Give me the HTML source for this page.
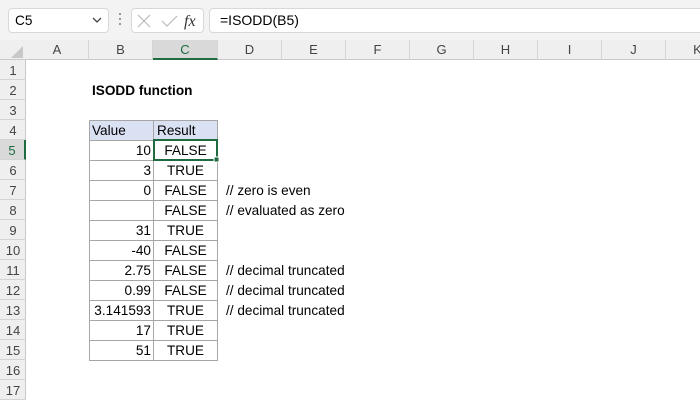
<!DOCTYPE html>
<html><head><style>
body{margin:0;width:700px;height:400px;overflow:hidden;background:#fff;font-family:"Liberation Sans",Calibri,sans-serif;position:relative}
div{position:absolute;box-sizing:border-box}
.t{font-size:13.6px;color:#000;line-height:21px;white-space:nowrap}
.ch{top:40px;height:20px;font-size:13px;color:#444;text-align:center;line-height:20px;border-right:1px solid #d4d4d4}
.rh{left:0;width:26px;height:20px;font-size:13px;color:#444;text-align:center;line-height:21px;border-bottom:1px solid #d4d4d4}
</style></head><body>
<div style="left:0;top:0;width:700px;height:40px;background:#f3f3f3"></div>
<div style="left:8px;top:8px;width:101px;height:25px;background:#fff;border:1px solid #d8d8d8;border-radius:4px"></div>
<div class="t" style="left:15px;top:10px;font-size:13.6px">C5</div>
<svg style="position:absolute;left:92px;top:16px" width="10" height="8"><path d="M1 2 L5 6 L9 2" stroke="#444" stroke-width="1.3" fill="none"/></svg>
<div style="left:119px;top:13px;width:2px;height:2px;background:#999"></div>
<div style="left:119px;top:18px;width:2px;height:2px;background:#999"></div>
<div style="left:119px;top:23px;width:2px;height:2px;background:#999"></div>
<div style="left:131px;top:8px;width:73px;height:25px;background:#fff;border:1px solid #d8d8d8;border-radius:4px"></div>
<svg style="position:absolute;left:136px;top:12px" width="70" height="18"><path d="M2 3 L14 15 M14 3 L2 15" stroke="#bbb" stroke-width="1.2"/><path d="M26 9 L31 14 L41 4" stroke="#bbb" stroke-width="1.2" fill="none"/><text x="48" y="14" font-family="Liberation Serif" font-style="italic" font-size="16" fill="#333">fx</text></svg>
<div style="left:209px;top:8px;width:500px;height:25px;background:#fff;border:1px solid #d8d8d8;border-radius:4px"></div>
<div class="t" style="left:220px;top:10px;font-size:14px">=ISODD(B5)</div>
<div style="left:0;top:40px;width:700px;height:20px;background:#efefef;border-bottom:1px solid #c8c8c8"></div>
<div style="left:0;top:60px;width:26px;height:340px;background:#efefef;border-right:1px solid #c8c8c8"></div>
<svg style="position:absolute;left:10px;top:45px" width="14" height="14"><path d="M13 1 L13 13 L1 13 Z" fill="#c8c8c8"/></svg>
<div class="ch" style="left:26px;width:63px">A</div>
<div class="ch" style="left:89px;width:64px">B</div>
<div class="ch" style="left:153px;width:65px;background:#d9d9d9;color:#1e6b3f;border-bottom:2px solid #1e6b3f">C</div>
<div class="ch" style="left:218px;width:64px">D</div>
<div class="ch" style="left:282px;width:64px">E</div>
<div class="ch" style="left:346px;width:64px">F</div>
<div class="ch" style="left:410px;width:64px">G</div>
<div class="ch" style="left:474px;width:64px">H</div>
<div class="ch" style="left:538px;width:64px">I</div>
<div class="ch" style="left:602px;width:64px">J</div>
<div class="ch" style="left:666px;width:64px">K</div>
<div class="rh" style="top:60px">1</div><div class="rh" style="top:80px">2</div><div class="rh" style="top:100px">3</div><div class="rh" style="top:120px">4</div>
<div class="rh" style="top:140px;background:#d9d9d9;color:#1e6b3f;border-right:2px solid #1e6b3f">5</div>
<div class="rh" style="top:160px">6</div><div class="rh" style="top:180px">7</div><div class="rh" style="top:200px">8</div><div class="rh" style="top:220px">9</div><div class="rh" style="top:240px">10</div><div class="rh" style="top:260px">11</div><div class="rh" style="top:280px">12</div><div class="rh" style="top:300px">13</div><div class="rh" style="top:320px">14</div><div class="rh" style="top:340px">15</div><div class="rh" style="top:360px">16</div><div class="rh" style="top:380px">17</div>
<div class="t" style="left:92px;top:80px;font-weight:bold">ISODD function</div>
<div style="left:89px;top:120px;width:129px;height:20px;background:#d9e1f2"></div>
<svg style="position:absolute;left:0;top:0" width="700" height="400">
<g stroke="#a6a6a6" stroke-width="1" fill="none">
<path d="M89.5 120 V360 M153.5 120 V360 M217.5 120 V360"/>
<path d="M89 120.5 H218 M89 140.5 H218 M89 160.5 H218 M89 180.5 H218 M89 200.5 H218 M89 220.5 H218 M89 240.5 H218 M89 260.5 H218 M89 280.5 H218 M89 300.5 H218 M89 320.5 H218 M89 340.5 H218 M89 360.5 H218"/>
</g>
<rect x="154" y="140" width="63" height="20" stroke="#1e6b3f" stroke-width="2" fill="none"/>
<rect x="214" y="157" width="5" height="5" fill="#1e6b3f" stroke="#fff" stroke-width="1"/>
</svg>
<div class="t" style="left:92px;top:120px">Value</div>
<div class="t" style="left:157px;top:120px">Result</div>
<div class="t" style="left:89px;top:140px;width:62px;text-align:right">10</div>
<div class="t" style="left:89px;top:160px;width:62px;text-align:right">3</div>
<div class="t" style="left:89px;top:180px;width:62px;text-align:right">0</div>
<div class="t" style="left:89px;top:220px;width:62px;text-align:right">31</div>
<div class="t" style="left:89px;top:240px;width:62px;text-align:right">-40</div>
<div class="t" style="left:89px;top:260px;width:62px;text-align:right">2.75</div>
<div class="t" style="left:89px;top:280px;width:62px;text-align:right">0.99</div>
<div class="t" style="left:89px;top:300px;width:62px;text-align:right">3.141593</div>
<div class="t" style="left:89px;top:320px;width:62px;text-align:right">17</div>
<div class="t" style="left:89px;top:340px;width:62px;text-align:right">51</div>
<div class="t" style="left:153px;top:140px;width:65px;text-align:center">FALSE</div>
<div class="t" style="left:153px;top:160px;width:65px;text-align:center">TRUE</div>
<div class="t" style="left:153px;top:180px;width:65px;text-align:center">FALSE</div>
<div class="t" style="left:153px;top:200px;width:65px;text-align:center">FALSE</div>
<div class="t" style="left:153px;top:220px;width:65px;text-align:center">TRUE</div>
<div class="t" style="left:153px;top:240px;width:65px;text-align:center">FALSE</div>
<div class="t" style="left:153px;top:260px;width:65px;text-align:center">FALSE</div>
<div class="t" style="left:153px;top:280px;width:65px;text-align:center">FALSE</div>
<div class="t" style="left:153px;top:300px;width:65px;text-align:center">TRUE</div>
<div class="t" style="left:153px;top:320px;width:65px;text-align:center">TRUE</div>
<div class="t" style="left:153px;top:340px;width:65px;text-align:center">TRUE</div>
<div class="t" style="left:226px;top:180px">// zero is even</div>
<div class="t" style="left:226px;top:200px">// evaluated as zero</div>
<div class="t" style="left:226px;top:260px">// decimal truncated</div>
<div class="t" style="left:226px;top:280px">// decimal truncated</div>
<div class="t" style="left:226px;top:300px">// decimal truncated</div>
</body></html>
